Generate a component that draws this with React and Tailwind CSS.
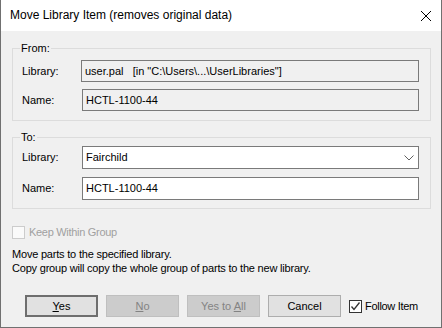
export default function App() {
  const font = { fontFamily: '"Liberation Sans", Arial, sans-serif' };
  return (
    <div
      className="w-[442px] h-[328px] flex flex-col border-x border-b border-[#707070] bg-[#f0f0f0] text-[11px] leading-[13px] text-black overflow-hidden"
      style={font}
    >
      {/* Title bar */}
      <div className="h-[31px] shrink-0 bg-white flex items-center justify-between pl-[9px] pr-[9px]">
        <span className="text-[12px] text-black">
          Move Library Item (removes original data)
        </span>
        <svg width="12" height="12" viewBox="0 0 12 12">
          <path d="M1 1 L11 11 M11 1 L1 11" stroke="#000" strokeWidth="1" fill="none" />
        </svg>
      </div>

      {/* Body */}
      <div className="flex flex-col pl-[11px] pr-[10px]">
        {/* From group */}
        <div className="relative mt-[17px] h-[73px] border border-[#dcdcdc] pt-[11px] pl-[9px] pr-[11px] flex flex-col gap-[7px]">
          <span className="absolute left-[7px] top-[-7px] px-[1px] bg-[#f0f0f0]">From:</span>
          <div className="flex items-center">
            <span className="w-[59px] shrink-0">Library:</span>
            <div className="w-[338px] h-[22px] border border-[#7a7a7a] bg-[#f0f0f0] flex items-center pl-[3px] whitespace-pre">
              {'user.pal   [in "C:\\Users\\...\\UserLibraries"]'}
            </div>
          </div>
          <div className="flex items-center">
            <span className="w-[59px] shrink-0">Name:</span>
            <div className="w-[338px] h-[22px] border border-[#7a7a7a] bg-[#f0f0f0] flex items-center pl-[3px] ml-[1px]">
              HCTL-1100-44
            </div>
          </div>
        </div>

        {/* To group */}
        <div className="relative mt-[16px] h-[72px] border border-[#dcdcdc] pt-[8px] pl-[9px] pr-[11px] flex flex-col gap-[8px]">
          <span className="absolute left-[7px] top-[-7px] px-[1px] bg-[#f0f0f0]">To:</span>
          <div className="flex items-center">
            <span className="w-[59px] shrink-0">Library:</span>
            <div className="w-[338px] h-[23px] border border-[#7a7a7a] bg-white flex items-center justify-between pl-[3px] pr-[4px] ml-[1px]">
              <span>Fairchild</span>
              <svg width="10" height="6" viewBox="0 0 10 6">
                <path d="M0.5 0.5 L5 5 L9.5 0.5" stroke="#606060" strokeWidth="1" fill="none" />
              </svg>
            </div>
          </div>
          <div className="flex items-center">
            <span className="w-[59px] shrink-0">Name:</span>
            <div className="w-[338px] h-[23px] border border-[#7a7a7a] bg-white flex items-center pl-[3px] ml-[1px]">
              HCTL-1100-44
            </div>
          </div>
        </div>

        {/* Keep within group */}
        <div className="mt-[17px] flex items-center gap-[4px]">
          <div className="w-[13px] h-[13px] border border-[#cccccc] bg-[#fafafa]" />
          <span className="text-[#a0a0a0] tracking-[-0.3px]">Keep Within Group</span>
        </div>

        {/* Description */}
        <div className="mt-[8px] flex flex-col leading-[14px] tracking-[-0.2px]">
          <span>Move parts to the specified library.</span>
          <span>Copy group will copy the whole group of parts to the new library.</span>
        </div>

        {/* Buttons */}
        <div className="mt-[20px] pl-[13px] flex items-center gap-[8px]">
          <button className="w-[73px] h-[22px] border-2 border-[#6e6e6e] bg-[#e1e1e1] flex items-center justify-center">
            <span><span className="underline">Y</span>es</span>
          </button>
          <button className="w-[73px] h-[22px] border border-[#bfbfbf] bg-[#cccccc] text-[#838383] flex items-center justify-center">
            <span><span className="underline">N</span>o</span>
          </button>
          <button className="w-[73px] h-[22px] border border-[#bfbfbf] bg-[#cccccc] text-[#838383] flex items-center justify-center">
            <span>Yes to <span className="underline">A</span>ll</span>
          </button>
          <button className="w-[73px] h-[22px] border border-[#adadad] bg-[#e1e1e1] flex items-center justify-center">
            Cancel
          </button>
          <div className="flex items-center gap-[3px]">
            <div className="w-[13px] h-[13px] border border-[#333333] bg-white flex items-center justify-center">
              <svg width="11" height="11" viewBox="0 0 11 11">
                <path d="M1.5 5.5 L4 8.5 L9.5 1.5" stroke="#333333" strokeWidth="1.3" fill="none" />
              </svg>
            </div>
            <span className="tracking-[-0.3px]">Follow Item</span>
          </div>
        </div>
      </div>
    </div>
  );
}
